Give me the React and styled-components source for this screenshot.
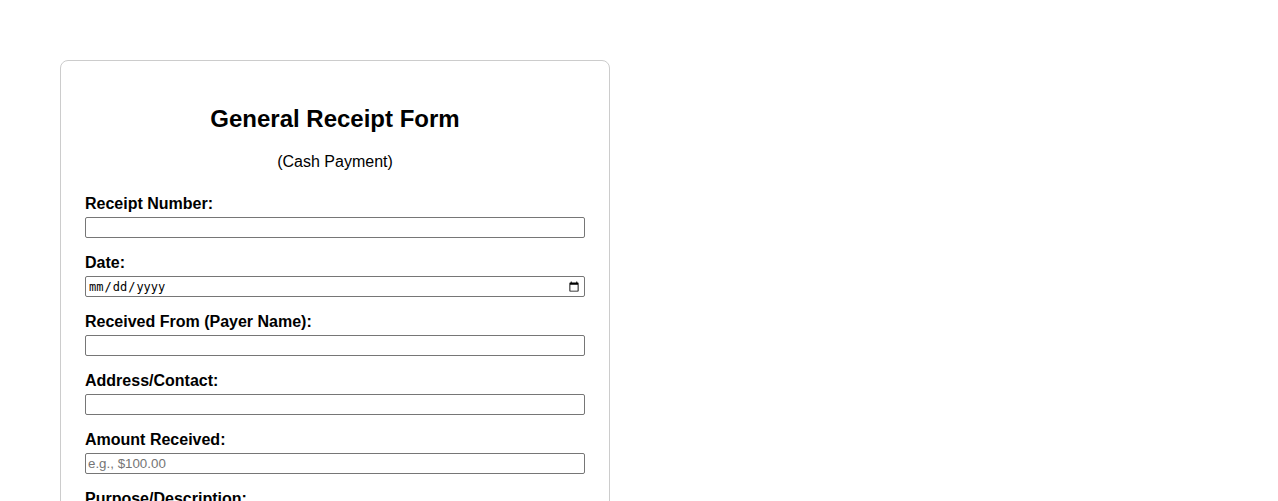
import React from 'react';
import styled, { createGlobalStyle } from 'styled-components';

const GlobalStyle = createGlobalStyle`
  body {
    margin: 0;
    background: #fff;
    font-family: "Liberation Sans", Arial, sans-serif;
    color: #000;
  }
`;

// card that holds the whole form
const Card = styled.div`
  width: 500px;
  margin: 60px 0 40px 60px;
  padding: 24px;
  border: 1px solid #ccc;
  border-radius: 8px;
`;

const Title = styled.h2`
  font-size: 24px;
  font-weight: bold;
  text-align: center;
  margin: 20px 0;
`;

const Subtitle = styled.p`
  font-size: 16px;
  text-align: center;
  margin: 0 0 24px;
`;

const Group = styled.div`
  margin-bottom: 16px;
`;

const Label = styled.label`
  display: block;
  font-weight: bold;
  font-size: 16px;
  margin-bottom: 4px;
`;

const Input = styled.input`
  display: block;
  width: 100%;
  box-sizing: border-box;
  height: 21px;
  padding: 1px 2px;
  border: 1px solid #767676;
  border-radius: 2px;
  font-family: ${(p) => (p.type === 'date' ? '"DejaVu Sans Mono", monospace' : '"Liberation Sans", Arial, sans-serif')};
  font-size: ${(p) => (p.type === 'date' ? '12px' : '13.33px')};
  &::placeholder {
    color: #757575;
  }
`;

const TextArea = styled.textarea`
  display: block;
  width: 100%;
  box-sizing: border-box;
  height: 60px;
  border: 1px solid #767676;
  border-radius: 2px;
`;

const fields = [
  { id: 'receipt', label: 'Receipt Number:', type: 'text' },
  { id: 'date', label: 'Date:', type: 'date' },
  { id: 'payer', label: 'Received From (Payer Name):', type: 'text' },
  { id: 'address', label: 'Address/Contact:', type: 'text' },
  { id: 'amount', label: 'Amount Received:', type: 'text', placeholder: 'e.g., $100.00' },
];

function App() {
  return (
    <>
      <GlobalStyle />
      <Card>
        <Title>General Receipt Form</Title>
        <Subtitle>(Cash Payment)</Subtitle>
        <form>
          {fields.map((f) => (
            <Group key={f.id}>
              <Label htmlFor={f.id}>{f.label}</Label>
              <Input id={f.id} type={f.type} placeholder={f.placeholder} />
            </Group>
          ))}
          <Group>
            <Label htmlFor="purpose">Purpose/Description:</Label>
            <TextArea id="purpose" />
          </Group>
        </form>
      </Card>
    </>
  );
}

export default App;
